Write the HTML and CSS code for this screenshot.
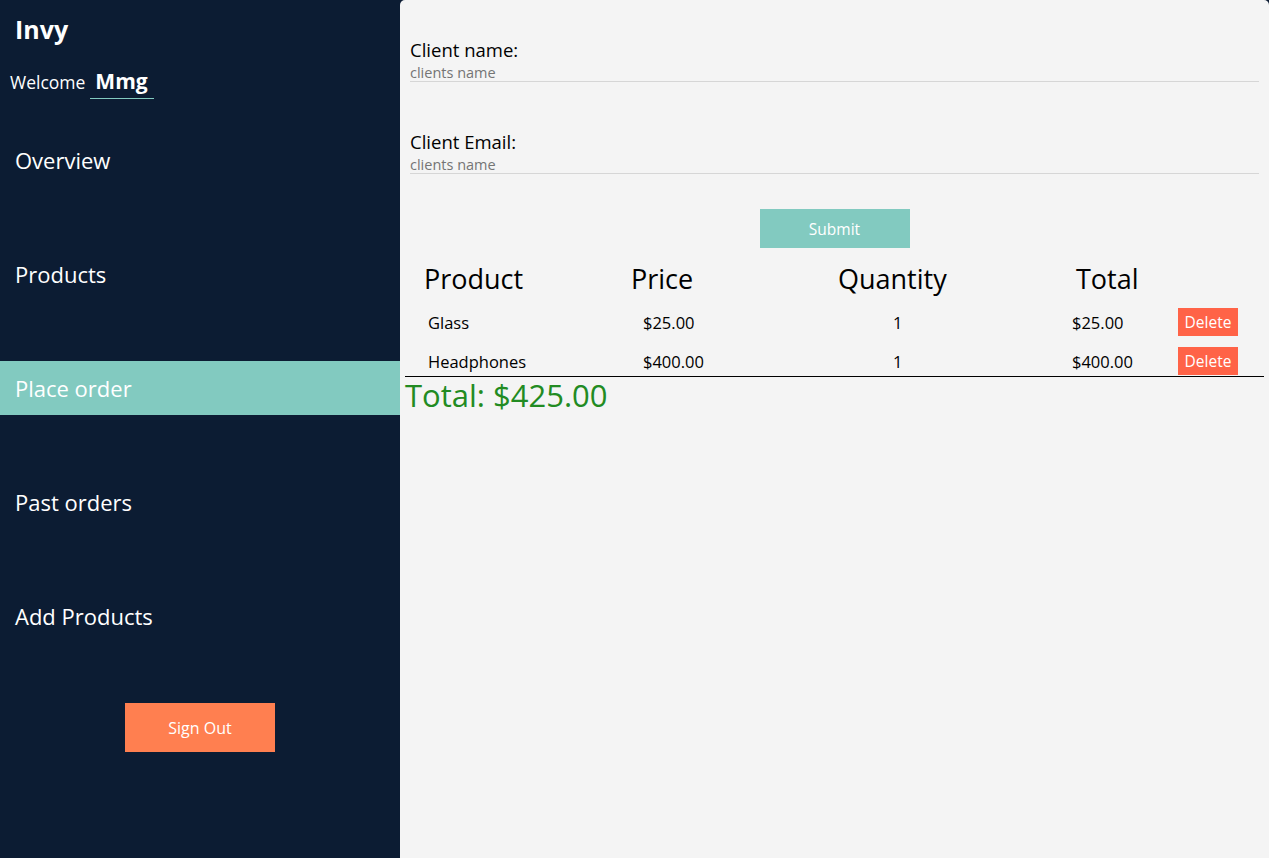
FILE: index.html
```html
<!DOCTYPE html>
<html lang="en">
<head>
<meta charset="utf-8">
<title>Invy</title>
<link rel="stylesheet" href="styles.css">
</head>
<body>
<div class="app">
  <aside class="sidebar">
    <div class="brand">Invy</div>
    <div class="welcome">
      <span class="welcome-label">Welcome</span>
      <span class="welcome-name">Mmg</span>
    </div>
    <nav class="nav">
      <a class="nav-item">Overview</a>
      <a class="nav-item">Products</a>
      <a class="nav-item active">Place order</a>
      <a class="nav-item">Past orders</a>
      <a class="nav-item">Add Products</a>
      <button class="signout">Sign Out</button>
    </nav>
  </aside>
  <main class="main">
    <form class="order-form">
      <div class="field">
        <label class="field-label">Client name:</label>
        <input class="field-input" type="text" placeholder="clients name">
      </div>
      <div class="field">
        <label class="field-label">Client Email:</label>
        <input class="field-input" type="text" placeholder="clients name">
      </div>
      <button class="submit" type="button">Submit</button>
    </form>
    <div class="table">
      <div class="table-head">
        <span class="th th-product">Product</span>
        <span class="th th-price">Price</span>
        <span class="th th-qty">Quantity</span>
        <span class="th th-total">Total</span>
      </div>
      <div class="table-body">
        <div class="row">
          <span class="td">Glass</span>
          <span class="td">$25.00</span>
          <span class="td">1</span>
          <span class="td">$25.00</span>
          <span class="td"><button class="delete" type="button">Delete</button></span>
        </div>
        <div class="row">
          <span class="td">Headphones</span>
          <span class="td">$400.00</span>
          <span class="td">1</span>
          <span class="td">$400.00</span>
          <span class="td"><button class="delete" type="button">Delete</button></span>
        </div>
      </div>
    </div>
    <div class="grand-total">Total: $425.00</div>
  </main>
</div>
</body>
</html>
```
FILE: styles.css
```css
* { box-sizing: border-box; }

html, body {
  margin: 0;
  height: 100%;
}

body {
  background: #0c1c33;
  font-family: "Open Sans", "Liberation Sans", sans-serif;
  color: #000;
}

.app {
  display: flex;
  height: 100vh;
}

/* Sidebar */
.sidebar {
  width: 400px;
  flex: none;
  background: #0c1c33;
  color: #fff;
  display: flex;
  flex-direction: column;
}

.brand {
  font-weight: 700;
  font-size: 25px;
  line-height: 34px;
  padding: 12px 15px 0;
}

.welcome {
  display: flex;
  align-items: baseline;
  gap: 5px;
  padding-left: 10px;
  margin-top: 21px;
}

.welcome-label {
  font-size: 17.5px;
}

.welcome-name {
  font-weight: 700;
  font-size: 21px;
  line-height: 28px;
  padding: 0 6px 3px 5px;
  border-bottom: 1px solid #82cac0;
}

.nav {
  display: flex;
  flex-direction: column;
  gap: 60px;
  margin-top: 34px;
}

.nav-item {
  height: 54px;
  display: flex;
  align-items: center;
  padding-left: 15px;
  font-size: 22px;
  color: #fff;
}

.nav-item.active {
  background: #82cac0;
}

.signout {
  align-self: center;
  width: 150px;
  height: 49px;
  border: none;
  background: #ff7f50;
  color: #fff;
  font-family: inherit;
  font-size: 16px;
}

/* Main */
.main {
  flex: 1;
  background: #f4f4f4;
  border-radius: 5px 5px 0 0;
  display: flex;
  flex-direction: column;
}

.order-form {
  display: flex;
  flex-direction: column;
  padding: 39px 10px 0;
}

.field {
  display: flex;
  flex-direction: column;
  margin-bottom: 49px;
}

.field + .field {
  margin-bottom: 35px;
}

.field-label {
  font-size: 18.5px;
  line-height: 22px;
}

.field-input {
  border: none;
  border-bottom: 1px solid #d6d6d6;
  background: transparent;
  height: 21px;
  padding: 2px 0 0;
  font-family: inherit;
  font-size: 14.5px;
  outline: none;
}

.field-input::placeholder {
  color: #757575;
}

.submit {
  align-self: center;
  width: 150px;
  height: 39px;
  border: none;
  background: #82cac0;
  color: #fff;
  font-family: inherit;
  font-size: 15.5px;
}

.table {
  margin: 11px 5px 0;
}

.table-head {
  display: grid;
  grid-template-columns: 226px 207px 238px 1fr;
  height: 38px;
  align-items: center;
  font-size: 27px;
}

.th-product { padding-left: 19px; }

.table-body {
  border-bottom: 1px solid #000;
  padding-bottom: 1px;
}

.row {
  display: grid;
  grid-template-columns: 238px 250px 179px 106px 60px;
  align-items: center;
  padding-top: 11px;
  font-size: 16.5px;
}

.row .td:first-child { padding-left: 23px; }

.delete {
  display: block;
  width: 60px;
  height: 28px;
  border: none;
  padding: 0;
  background: #ff6347;
  color: #fff;
  font-family: inherit;
  font-size: 15.5px;
}

.grand-total {
  padding-left: 5px;
  font-size: 31px;
  line-height: 36px;
  color: #228b22;
}
```
